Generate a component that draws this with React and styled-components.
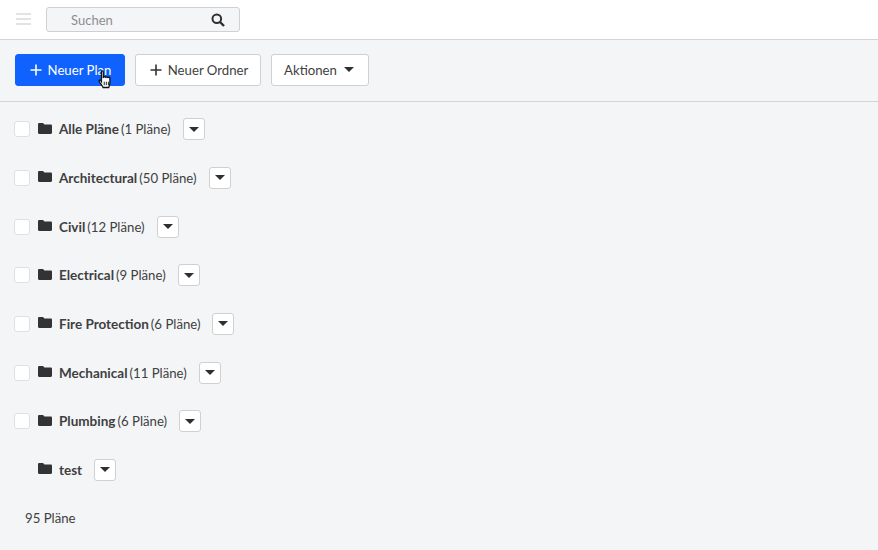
import styled, { createGlobalStyle } from "styled-components"

const GlobalStyle = createGlobalStyle`
  html, body {
    margin: 0;
    padding: 0;
    height: 100%;
    background: #f4f5f7;
    font-family: Lato, "Liberation Sans", sans-serif;
    color: #3f3f3f;
  }
`

const Page = styled.div`
  width: 878px;
  height: 550px;
  overflow: hidden;
  background: #f4f5f7;
`

const TopBar = styled.div`
  height: 39px;
  padding-left: 16px;
  background: #fff;
  border-bottom: 1px solid #d3d4d6;
  display: flex;
  align-items: center;
  gap: 15px;
`

const Burger = styled.div`
  width: 15px;
  height: 12px;
  margin-bottom: 1px;
  display: flex;
  flex-direction: column;
  justify-content: space-between;

  span {
    display: block;
    height: 2px;
    background: #e2e3e5;
  }
`

const Search = styled.div`
  box-sizing: border-box;
  width: 194px;
  height: 25px;
  background: #f4f5f7;
  border: 1px solid #cfd0d2;
  border-radius: 3px;
  display: flex;
  align-items: center;
  justify-content: space-between;
  padding: 0 14px 0 24px;
  font-size: 13px;
  color: #8d8e90;
`

const Toolbar = styled.div`
  height: 59px;
  padding: 0 0 2px 15px;
  border-bottom: 1px solid #d3d4d6;
  display: flex;
  align-items: center;
  gap: 10px;
`

const ToolButton = styled.div`
  position: relative;
  box-sizing: border-box;
  height: 32px;
  width: ${p => p.$width}px;
  display: flex;
  align-items: center;
  justify-content: center;
  gap: ${p => p.$gap}px;
  padding: 0 ${p => p.$trim || 0}px 0 ${p => p.$lead || 0}px;
  border-radius: 3px;
  font-size: 13.2px;
  background: ${p => (p.$primary ? "#0f62fe" : "#fff")};
  color: ${p => (p.$primary ? "#fff" : "#3f3f3f")};
  border: 1px solid ${p => (p.$primary ? "#0f62fe" : "#cfd0d2")};
`

const Cursor = styled.svg`
  position: absolute;
  left: 82px;
  top: 15px;
`

const List = styled.div`
  display: flex;
  flex-direction: column;
  padding-top: 3px;
`

const Row = styled.div`
  height: 48.65px;
  display: flex;
  align-items: center;
  padding-left: 14px;
  font-size: 13.2px;
`

const Check = styled.div`
  box-sizing: border-box;
  width: 16px;
  height: 16px;
  margin-right: 8px;
  background: #fff;
  border: 1px solid #dfe0e3;
  border-radius: 3px;
  visibility: ${p => (p.$hidden ? "hidden" : "visible")};
`

const FolderIcon = styled.svg`
  width: 14px;
  height: 11px;
  margin-right: 7px;
  margin-top: -2px;
`

const Name = styled.span`
  font-size: 13.5px;
  font-weight: 700;
  color: #3f3f3f;
`

const Count = styled.span`
  margin-left: 2px;
`

const Caret = styled.div`
  box-sizing: border-box;
  width: 22px;
  height: 22px;
  margin-left: 12px;
  background: #fff;
  border: 1px solid #cfd0d2;
  border-radius: 3px;
  display: flex;
  align-items: center;
  justify-content: center;
`

const Total = styled.div`
  padding: 16px 0 0 25px;
  font-size: 13.2px;
`

const Triangle = styled.span`
  display: block;
  width: 0;
  height: 0;
  border-left: 5.5px solid transparent;
  border-right: 5.5px solid transparent;
  border-top: 5.5px solid #2f2f2f;
`

function Plus({ color }) {
  return (
    <svg width="12" height="12" viewBox="0 0 12 12">
      <path d="M6 0.5v11M0.5 6h11" stroke={color} strokeWidth="1.6" fill="none" />
    </svg>
  )
}

function Folder() {
  return (
    <FolderIcon viewBox="0 1 15 11" preserveAspectRatio="none">
      <path
        d="M1.2 1h4.2l1.5 1.6h6.9c.6 0 1.2.5 1.2 1.1v7.1c0 .6-.6 1.2-1.2 1.2H1.2C.6 12 0 11.4 0 10.8V2.2C0 1.5.6 1 1.2 1z"
        fill="#333"
      />
    </FolderIcon>
  )
}

const folders = [
  { name: "Alle Pläne", count: "(1 Pläne)" },
  { name: "Architectural", count: "(50 Pläne)" },
  { name: "Civil", count: "(12 Pläne)" },
  { name: "Electrical", count: "(9 Pläne)" },
  { name: "Fire Protection", count: "(6 Pläne)" },
  { name: "Mechanical", count: "(11 Pläne)" },
  { name: "Plumbing", count: "(6 Pläne)" },
  { name: "test", noCheck: true },
]

export default function App() {
  return (
    <Page>
      <GlobalStyle />
      <TopBar>
        <Burger>
          <span />
          <span />
          <span />
        </Burger>
        <Search>
          Suchen
          <svg width="14" height="14" viewBox="0 0 14 14">
            <circle cx="5.8" cy="5.8" r="4.3" stroke="#2f2f2f" strokeWidth="2" fill="none" />
            <path d="M9 9l4 4" stroke="#2f2f2f" strokeWidth="2.4" />
          </svg>
        </Search>
      </TopBar>
      <Toolbar>
        <ToolButton $primary $width={110} $gap={6} $lead={1}>
          <Plus color="#fff" />
          Neuer Plan
          <Cursor width="15" height="20" viewBox="0 0 13 17">
            <path
              d="M3 1.2c0-.7 1.6-.7 1.6 0v5l.4-.1c0-.7 1.5-.7 1.5 0l.4.1c0-.6 1.5-.6 1.5.1l.4.1c.2-.5 1.5-.4 1.5.3v4.5c0 1.6-.7 2.5-1 3.8H4.4C3.8 13.5 1.9 11.6 1 9.6c-.4-.9.8-1.4 1.3-.7L3 9.9z"
              fill="#fff"
              stroke="#111"
              strokeWidth="1.1"
            />
            <path d="M5.4 10v3M7.2 10v3M9 10v3" stroke="#111" strokeWidth=".8" />
          </Cursor>
        </ToolButton>
        <ToolButton $width={126} $gap={6} $lead={2}>
          <Plus color="#333" />
          Neuer Ordner
        </ToolButton>
        <ToolButton $width={98} $gap={7} $trim={2}>
          Aktionen
          <Triangle />
        </ToolButton>
      </Toolbar>
      <List>
        {folders.map(folder => (
          <Row key={folder.name}>
            <Check $hidden={folder.noCheck} />
            <Folder />
            <Name>{folder.name}</Name>
            {folder.count && <Count>{folder.count}</Count>}
            <Caret>
              <Triangle />
            </Caret>
          </Row>
        ))}
      </List>
      <Total>95 Pläne</Total>
    </Page>
  )
}
